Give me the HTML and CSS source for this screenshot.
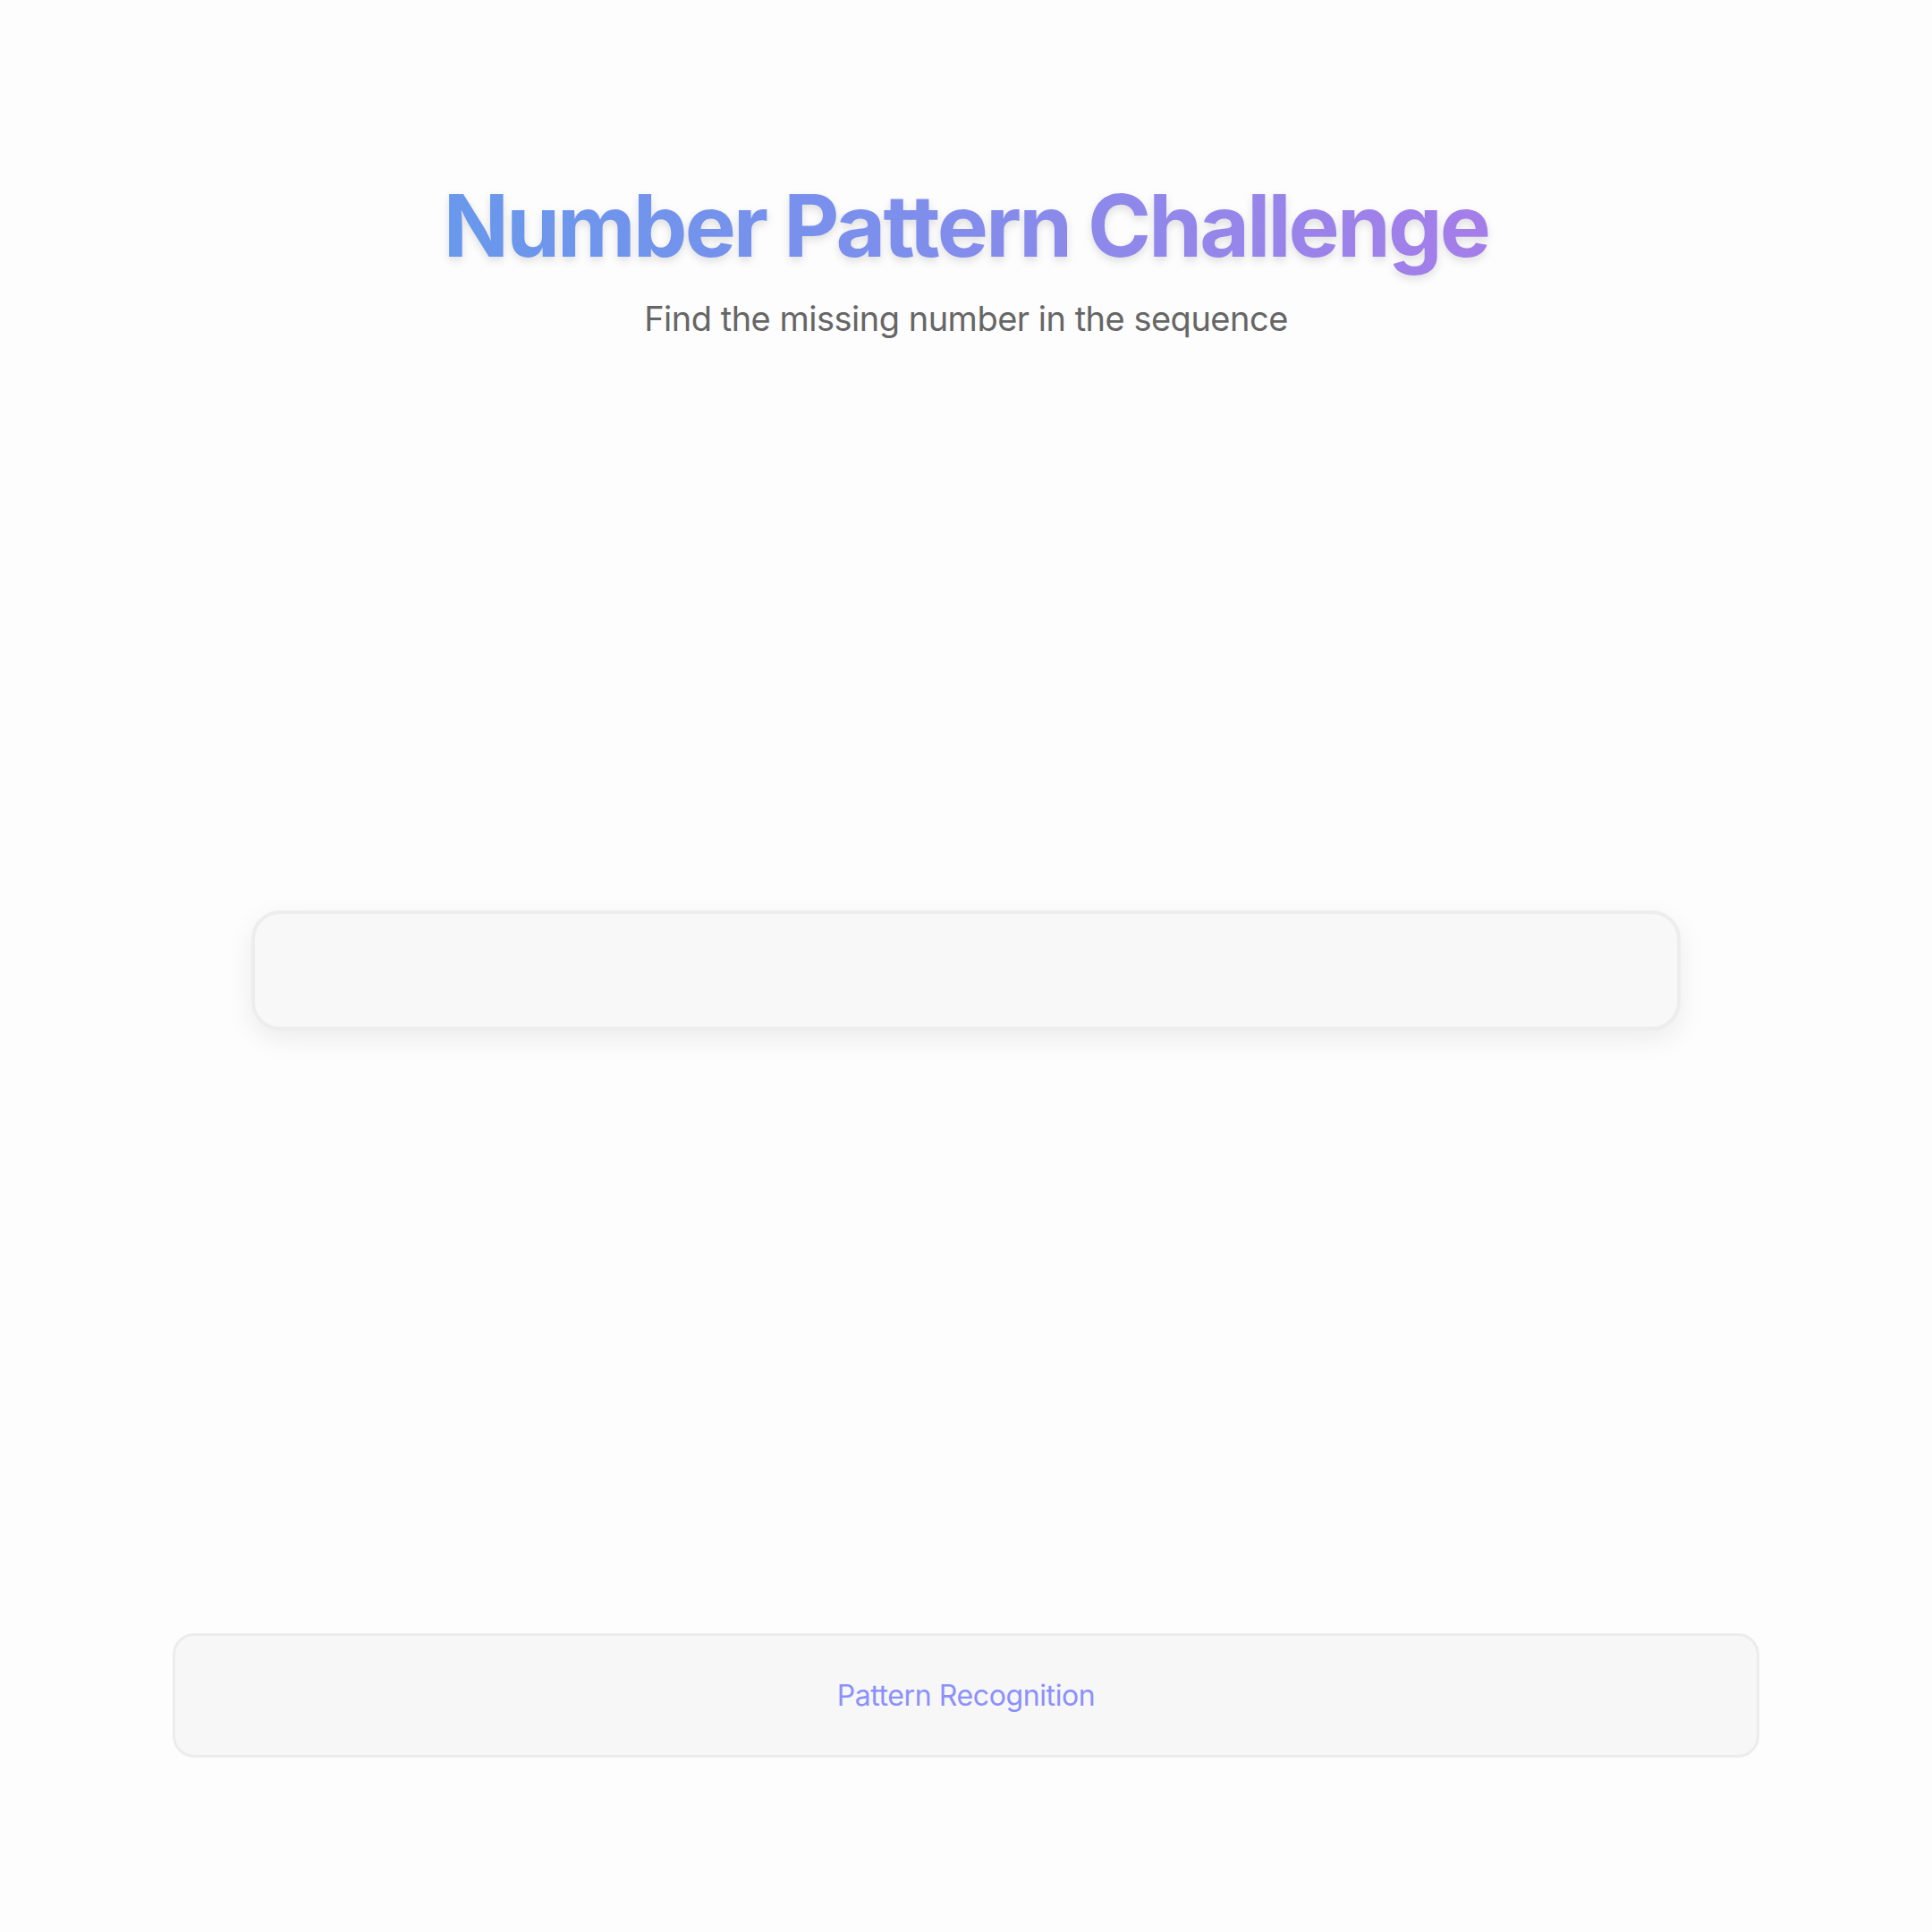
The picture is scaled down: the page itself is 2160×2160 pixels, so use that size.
FILE: index.html
```html
<!DOCTYPE html>
<html lang="en">
<head>
<meta charset="utf-8">
<title>Number Pattern Challenge</title>
<link rel="stylesheet" href="styles.css">
</head>
<body>
<main class="page">
  <header class="header">
    <h1 class="title">Number Pattern Challenge</h1>
    <p class="subtitle">Find the missing number in the sequence</p>
  </header>
  <section class="sequence-box"></section>
  <footer class="footer-box">
    <span class="footer-text">Pattern Recognition</span>
  </footer>
</main>
</body>
</html>
```

FILE: styles.css
```css
html, body {
  margin: 0;
  padding: 0;
}

body {
  background: #fdfdfd;
  font-family: Inter, "Noto Sans", "Liberation Sans", sans-serif;
  min-height: 2160px;
}

.page {
  display: flex;
  flex-direction: column;
  align-items: center;
  padding-top: 194px;
}

.header {
  display: flex;
  flex-direction: column;
  align-items: center;
}

.title {
  margin: 0;
  font-size: 96px;
  font-weight: 700;
  line-height: 116px;
  letter-spacing: -2.8px;
  background: linear-gradient(90deg, #6898ec 0%, #7b8fec 40%, #9287ea 70%, #a57de9 100%);
  -webkit-background-clip: text;
  background-clip: text;
  color: transparent;
  filter: drop-shadow(0 4px 5px rgba(0, 0, 0, 0.12));
}

.subtitle {
  margin: 23px 0 0;
  font-size: 38px;
  line-height: 46px;
  letter-spacing: -0.5px;
  color: #666666;
}

.sequence-box {
  box-sizing: border-box;
  margin-top: 639px;
  width: 1598px;
  height: 134px;
  background: #f8f8f8;
  border: 4px solid #ededed;
  border-radius: 32px;
  box-shadow: 0 10px 30px rgba(0, 0, 0, 0.07);
}

.footer-box {
  box-sizing: border-box;
  margin-top: 674px;
  width: 1774px;
  height: 139px;
  background: #f7f7f7;
  border: 3px solid #ececec;
  border-radius: 24px;
  display: flex;
  align-items: center;
  justify-content: center;
}

.footer-text {
  font-size: 32px;
  letter-spacing: -0.4px;
  color: #8b90fd;
}
```
